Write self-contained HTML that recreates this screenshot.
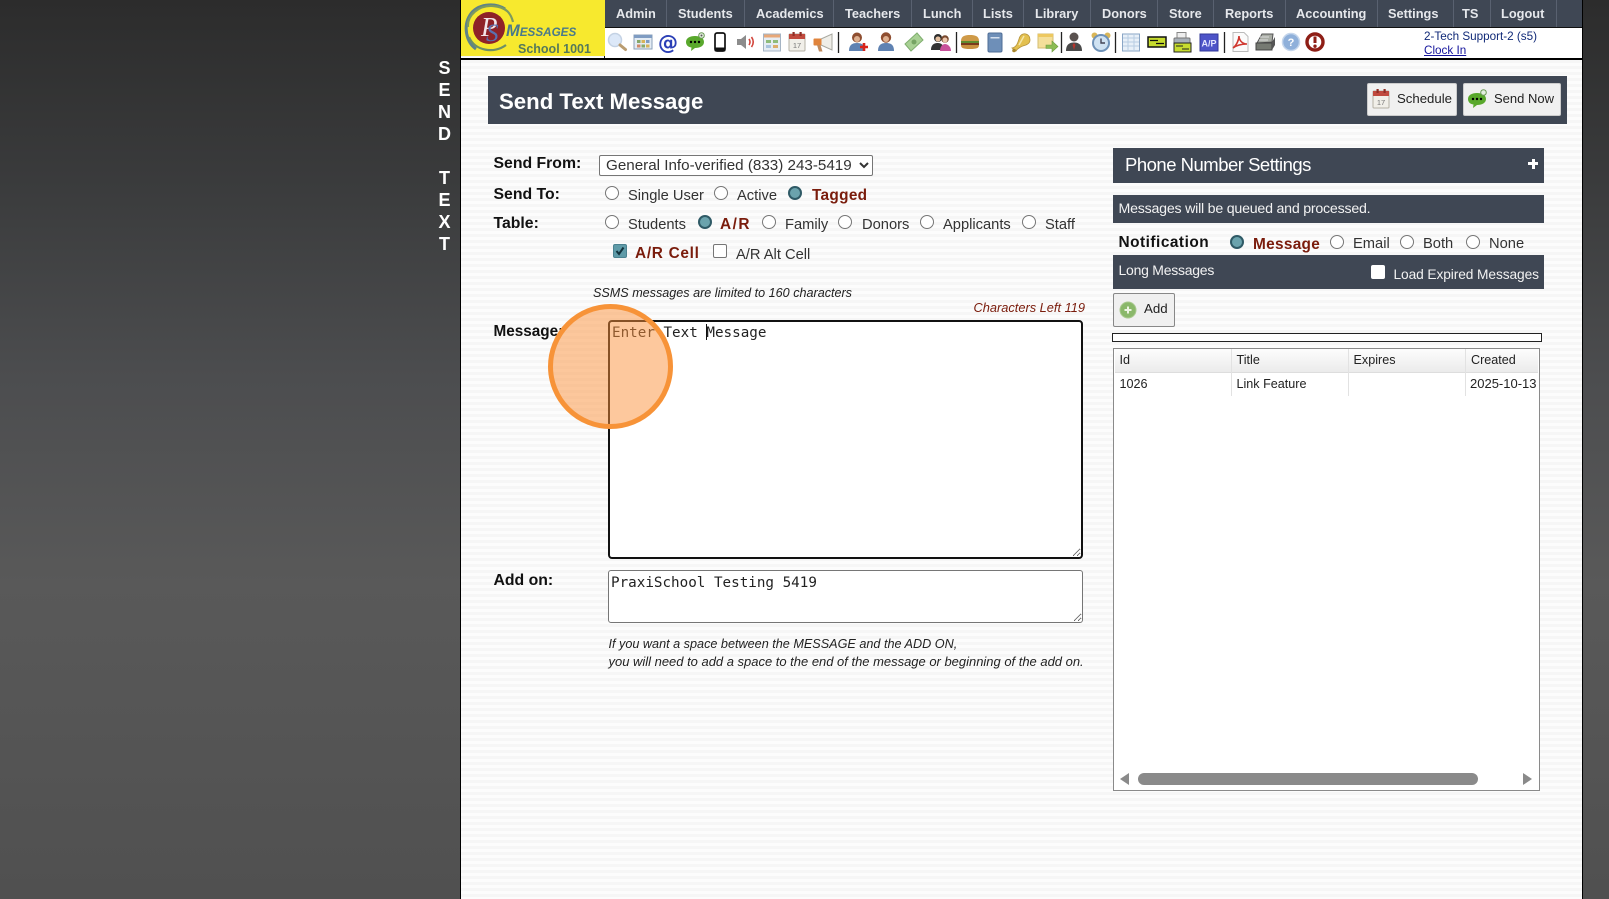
<!DOCTYPE html>
<html lang="en">
<head>
<meta charset="utf-8">
<title>Send Text Message</title>
<style>
html,body{margin:0;padding:0;width:1609px;height:899px;overflow:hidden;font-family:"Liberation Sans",sans-serif;background:#555}
.side{position:absolute;top:0;height:899px;background:linear-gradient(#2c2c2c 0,#3a3b3c 20%,#4c4d4f 42%,#595959 65%,#505050 100%)}
#page{position:absolute;left:460px;top:0;width:1123px;height:899px;box-sizing:border-box;border-left:1px solid #000;border-right:1px solid #000;background:repeating-linear-gradient(#f6f6f6 0,#f6f6f6 3px,#fcfcfc 3px,#fcfcfc 6px)}
.abs,.t{position:absolute}
.t{white-space:nowrap;line-height:20px;height:20px;color:#222}
.l{font-size:14.7px;color:#333}
.b{font-size:15.8px;font-weight:bold;color:#111}
.r{font-size:15.4px;font-weight:bold;color:#7a1c0c;letter-spacing:.3px}
.nav{font-size:12.8px;font-weight:bold;color:#e6e8ec}
.sep{position:absolute;top:0;width:1px;height:27px;background:#596170}
.bar{position:absolute;background:#3f4754}
.ro{position:absolute;width:14px;height:14px;box-sizing:border-box;border:1px solid #767676;border-radius:50%;background:#fff}
.rc{position:absolute;width:14px;height:14px;box-sizing:border-box;border:2px solid #2f5a66;border-radius:50%;background:#6ba3ad}
.cb{position:absolute;width:14px;height:14px;box-sizing:border-box;border:1px solid #767676;border-radius:2px;background:#fff}
.btn{position:absolute;box-sizing:border-box;background:#f0f0f0;border:1px solid #ccc;border-radius:2px}
.let{position:absolute;left:434px;width:21px;text-align:center;font-size:18px;font-weight:bold;color:#fff;line-height:20px}
textarea{position:absolute;box-sizing:border-box;margin:0;background:#fff;font-family:"DejaVu Sans Mono","Liberation Mono",monospace;font-size:14.25px;line-height:17px;padding:2px;color:#222;outline:none}
select{position:absolute;box-sizing:border-box;margin:0;background:#fff;border:1px solid #767676;border-radius:2px;font-family:"Liberation Sans",sans-serif;font-size:15.2px;color:#333;padding:0 0 0 2px}
.i{font-size:12.6px;font-style:italic;color:#222}
.c{font-size:12.6px;color:#222}
</style>
</head>
<body>
<div class="side" style="left:0;width:460px"></div>
<div class="side" style="left:1583px;width:26px"></div>

<div class="let" style="top:58px">S</div>
<div class="let" style="top:80px">E</div>
<div class="let" style="top:102px">N</div>
<div class="let" style="top:124px">D</div>
<div class="let" style="top:168px">T</div>
<div class="let" style="top:190px">E</div>
<div class="let" style="top:212px">X</div>
<div class="let" style="top:234px">T</div>

<div id="page"></div>

<!-- top nav -->
<div class="bar" style="left:605px;top:0;width:977px;height:27px;border-bottom:1px solid #111"></div>
<div class="abs" style="left:604px;top:28px;width:978px;height:30px;background:#fff"></div>
<div class="abs" style="left:461px;top:58px;width:1121px;height:1.5px;background:#000"></div>
<div class="abs" style="left:604px;top:0;width:1px;height:58px;background:#111"></div>

<div class="sep" style="left:666px"></div><div class="sep" style="left:744px"></div><div class="sep" style="left:833px"></div><div class="sep" style="left:911px"></div><div class="sep" style="left:972px"></div><div class="sep" style="left:1023px"></div><div class="sep" style="left:1090px"></div><div class="sep" style="left:1157px"></div><div class="sep" style="left:1213px"></div><div class="sep" style="left:1285px"></div><div class="sep" style="left:1377px"></div><div class="sep" style="left:1453px"></div><div class="sep" style="left:1490px"></div><div class="sep" style="left:1556px"></div>

<span class="t nav" style="left:616px;top:4px">Admin</span>
<span class="t nav" style="left:678px;top:4px">Students</span>
<span class="t nav" style="left:756px;top:4px">Academics</span>
<span class="t nav" style="left:845px;top:4px">Teachers</span>
<span class="t nav" style="left:923px;top:4px">Lunch</span>
<span class="t nav" style="left:983px;top:4px">Lists</span>
<span class="t nav" style="left:1035px;top:4px">Library</span>
<span class="t nav" style="left:1102px;top:4px">Donors</span>
<span class="t nav" style="left:1169px;top:4px">Store</span>
<span class="t nav" style="left:1225px;top:4px">Reports</span>
<span class="t nav" style="left:1296px;top:4px">Accounting</span>
<span class="t nav" style="left:1388px;top:4px">Settings</span>
<span class="t nav" style="left:1462px;top:4px">TS</span>
<span class="t nav" style="left:1501px;top:4px">Logout</span>

<!-- logo -->
<svg class="abs" style="left:461px;top:0" width="144" height="58" viewBox="0 0 144 58">
<rect width="144" height="56" fill="#f7e92e"/>
<path d="M15 49C5 42 2 26 9 15S33 2 44 9" fill="none" stroke="#5f8388" stroke-width="3"/>
<path d="M7 27C6 15 18 5 32 6S50 14 52 22" fill="none" stroke="#7d9a5e" stroke-width="2.2"/>
<path d="M8 37C14 51 33 54 45 45" fill="none" stroke="#6d8f66" stroke-width="2.2"/>
<circle cx="28" cy="28" r="16" fill="#8e2228"/>
<text x="20" y="36" font-family="Liberation Serif,serif" font-size="27" font-style="italic" fill="#f2e6ea">P</text>
<text x="25" y="41" font-family="Liberation Serif,serif" font-size="25" font-style="italic" fill="#5a70b0">S</text>
<text x="45" y="36" font-family="Liberation Sans,sans-serif" font-weight="bold" font-style="italic" fill="#49798a"><tspan font-size="16.5">M</tspan><tspan font-size="11.7">ESSAGES</tspan></text>
<text x="57" y="53" font-family="Liberation Sans,sans-serif" font-weight="bold" font-size="12.5" fill="#55795a">School 1001</text>
</svg>

<!-- toolbar icons -->
<svg class="abs" style="left:0;top:0;pointer-events:none" width="1609" height="70">
<g stroke="#222" stroke-width="1.3"><path d="M838.500 32V53M956.500 32V53M1061.500 32V53M1115.500 32V53M1224.500 32V53"/></g>
<g transform="translate(606,31)"><circle cx="9" cy="9" r="6.500" fill="#dce8f8" stroke="#c4d2e4" stroke-width="1.500"/><path d="M14 14L19.500 18.500" stroke="#b99c70" stroke-width="3" stroke-linecap="round"/></g>
<g transform="translate(632,31)"><rect x="2" y="4" width="18" height="14" fill="#e4ecf4" stroke="#8ba0ba"/><rect x="2" y="4" width="18" height="3" fill="#7f9cc2"/><rect x="5" y="9" width="3.500" height="3" fill="#86a86a"/><rect x="9.500" y="9" width="3.500" height="3" fill="#d8b35a"/><rect x="14" y="9" width="3.500" height="3" fill="#7f9cc2"/><rect x="5" y="13.500" width="3.500" height="3" fill="#d08a6a"/><rect x="9.500" y="13.500" width="3.500" height="3" fill="#86a86a"/><rect x="14" y="13.500" width="3.500" height="3" fill="#d8b35a"/></g>
<text x="668" y="49.500" text-anchor="middle" font-family="DejaVu Sans,sans-serif" font-weight="bold" font-size="20" fill="#2b3fb6">@</text>
<g transform="translate(684,31)"><path d="M2 11C2 7 6 5 11 5S20 7 20 11 16 17 11 17L7 20 7.500 16.500C4 16 2 14 2 11Z" fill="#59a82c"/><circle cx="7" cy="11" r="1.200"/><circle cx="11" cy="11" r="1.200"/><circle cx="15" cy="11" r="1.200"/><circle cx="17.500" cy="4.500" r="2.800" fill="#e4efe0" stroke="#6b9a55"/><circle cx="17.500" cy="4.500" r="1" fill="#555"/></g>
<g transform="translate(709,31)"><rect x="6" y="2" width="10" height="18" rx="2" fill="#fff" stroke="#111" stroke-width="1.700"/><rect x="5.500" y="16.500" width="11" height="4" rx="1" fill="#111"/></g>
<g transform="translate(735,31)"><path d="M2 8H6L11 4V18L6 14H2Z" fill="#8c8c8c"/><path d="M14 8Q16 11 14 14M16.500 6Q20 11 16.500 16" fill="none" stroke="#d2453c" stroke-width="1.600"/></g>
<g transform="translate(761,31)"><rect x="2.500" y="3" width="17" height="17" fill="#e6edf3" stroke="#a5b4c4"/><rect x="3" y="3.500" width="16" height="3" fill="#e8a878"/><path d="M5 9H10V12H5ZM12 9H17V12H12Z" fill="#8fbc7a"/><path d="M5 14H10V17H5Z" fill="#a9c4de"/><path d="M12 14H17V17H12Z" fill="#dcae6a"/></g>
<g transform="translate(786,31)"><rect x="3" y="3" width="16" height="17" rx="1" fill="#f1efe9" stroke="#b5b0a5"/><rect x="3" y="3" width="16" height="5" fill="#c04a3e"/><rect x="6.500" y="1" width="2.200" height="4" fill="#8f2e25"/><rect x="13.500" y="1" width="2.200" height="4" fill="#8f2e25"/><text x="11" y="17" text-anchor="middle" font-size="7.500" font-family="Liberation Sans,sans-serif" fill="#777">17</text></g>
<g transform="translate(812,31)"><path d="M9 8L20 3V19L9 14Z" fill="#efeee8" stroke="#a8a8a0"/><rect x="1.500" y="7.500" width="8" height="7" rx="1" fill="#e0843c"/><path d="M5 14L7 20.500H10.500L8.500 14Z" fill="#c08a5c"/></g>
<g transform="translate(847,31)"><circle cx="10" cy="6.500" r="5" fill="#8f4e30"/><circle cx="10" cy="8" r="3" fill="#deb090"/><path d="M2 20C2 14 5 12 10 12S18 14 18 20Z" fill="#5f82b2"/><path d="M13 16H21M17 12V20" stroke="#d8241c" stroke-width="2.600"/></g>
<g transform="translate(875,31)"><circle cx="11" cy="6.500" r="5.200" fill="#8f4e30"/><circle cx="11" cy="8" r="3" fill="#deb090"/><path d="M3 20C3 14 6 12 11 12S19 14 19 20Z" fill="#5f82b2"/></g>
<g transform="translate(902,31)"><path d="M3 13L15 2 21 9 9 20Z" fill="#a8d094" stroke="#7fae6e"/><circle cx="12" cy="11" r="2.500" fill="#76a464"/></g>
<g transform="translate(930,31)"><circle cx="8" cy="7" r="4" fill="#2d2d2d"/><circle cx="8" cy="8" r="2.600" fill="#e4c0a0"/><path d="M1 19C1 13 5 12 8 12S14 14 14 19Z" fill="#333"/><circle cx="15" cy="8" r="3.800" fill="#7a4a2f"/><circle cx="15" cy="9" r="2.500" fill="#ecc6ac"/><path d="M10 20C10 15 13 13 15 13S21 15 21 20Z" fill="#c8509a"/></g>
<g transform="translate(959,31)"><path d="M2 10C2 5 6 4 11 4S20 5 20 10Z" fill="#cf9a48"/><rect x="2" y="10" width="18" height="2" fill="#5f8c30"/><rect x="2" y="12" width="18" height="2" fill="#7a3a1e"/><path d="M2 14H20C20 17 18 18 11 18S2 17 2 14Z" fill="#c89040"/></g>
<g transform="translate(984,31)"><rect x="4" y="2" width="14" height="19" rx="1.500" fill="#6e8fb8" stroke="#4f6e96"/><rect x="6.500" y="6" width="9" height="1.500" fill="#d5e0ee"/></g>
<g transform="translate(1010,31)"><path d="M2 17C7 16 8 11 9 8 10 4 13 2 16 3S20 6 20 9 18 13 16 14C12 15 8 17 6 20Z" fill="#e3c04f" stroke="#b4923a" stroke-width=".8"/><path d="M14 5L9 14" stroke="#f4e6aa" stroke-width="1.500"/><circle cx="4" cy="19.500" r="1.800" fill="#a8862e"/></g>
<g transform="translate(1036,31)"><rect x="2" y="3" width="15" height="14" fill="#f4df9a" stroke="#d4bd70"/><rect x="2" y="3" width="15" height="3" fill="#edc860"/><path d="M10 14H16V10L22 15.500 16 21V17.500H10Z" fill="#8cbc54" stroke="#6d9a3e" stroke-width=".6"/></g>
<g transform="translate(1063,31)"><circle cx="11" cy="6" r="4.500" fill="#5a5250"/><path d="M3 20C3 13 7 11.500 11 11.500S19 13 19 20Z" fill="#4a4a4a"/><path d="M11 12L9.500 14 11 19 12.500 14Z" fill="#b8342c"/></g>
<g transform="translate(1090,31)"><circle cx="4.500" cy="4.500" r="3" fill="#d9b658"/><circle cx="17.500" cy="4.500" r="3" fill="#d9b658"/><circle cx="11" cy="12" r="8" fill="#cfe2f2" stroke="#6f92b8" stroke-width="2"/><path d="M11 7.500V12H15" fill="none" stroke="#445" stroke-width="1.400"/></g>
<g transform="translate(1120,31)"><rect x="2.500" y="3" width="17" height="17" fill="#e8f0f8" stroke="#8aa6c6"/><path d="M3 7H19M3 11H19M3 15H19M8 3V20M14 3V20" stroke="#b8cde2"/></g>
<g transform="translate(1146,31)"><rect x="2" y="6" width="18" height="10" fill="#c7dc2e" stroke="#111" stroke-width="1.500"/><path d="M4 9.500H12M10 12.500H18" stroke="#111" stroke-width="1.300"/></g>
<g transform="translate(1171,31)"><rect x="6" y="1.500" width="9" height="6" fill="#eee" stroke="#888"/><rect x="3" y="7" width="16" height="6" rx="1" fill="#a8b0b8" stroke="#777"/><rect x="3" y="12" width="17" height="9" fill="#c7dc2e" stroke="#222"/><path d="M5 15H12M11 18H18" stroke="#222"/></g>
<g transform="translate(1198,31)"><rect x="2" y="3" width="18" height="17" fill="#4d54c8" stroke="#33399a"/><text x="11" y="15.500" text-anchor="middle" font-size="9" font-weight="bold" font-family="Liberation Sans,sans-serif" fill="#e4e6ff">A/P</text></g>
<g transform="translate(1229,31)"><path d="M4 1.500H15L19 5.500V20.500H4Z" fill="#fbfbfb" stroke="#bbb"/><path d="M4 17C8 14 10 8 10 5 10 9 13 13 18 13 13 13 8 14 4 17Z" fill="none" stroke="#d03830" stroke-width="1.600"/></g>
<g transform="translate(1254,31)"><path d="M3 12L8 3H19L18 11Z" fill="#a8aca4" stroke="#555"/><path d="M2 12H18V19H2Z" fill="#767a72" stroke="#444"/><path d="M18 11L21 6V14L18 19Z" fill="#555"/><path d="M6 6H15M5 9H14" stroke="#ddd"/></g>
<g transform="translate(1280,31)"><circle cx="11" cy="11" r="8.500" fill="#8fb0da" stroke="#c5d6ec" stroke-width="1.500"/><text x="11" y="15" text-anchor="middle" font-size="11" font-weight="bold" font-family="Liberation Sans,sans-serif" fill="#fff">?</text></g>
<g transform="translate(1304,31)"><circle cx="11" cy="11" r="8" fill="#fff" stroke="#8e1e16" stroke-width="3.400"/><path d="M11 5.500V12" stroke="#8e1e16" stroke-width="3"/><circle cx="11" cy="15.200" r="1.700" fill="#8e1e16"/></g>
</svg>

<span class="t" style="left:1424px;top:27px;font-size:11.700px;color:#112a78">2-Tech Support-2 (s5)</span>
<a class="t" style="left:1424px;top:41px;font-size:11.700px;color:#14149c;text-decoration:underline">Clock In</a>

<!-- title bar -->
<div class="bar" style="left:488px;top:76px;width:1079px;height:48px"></div>
<span class="t" style="left:499px;top:92px;font-size:22.200px;font-weight:bold;color:#fff">Send Text Message</span>
<div class="btn" style="left:1367px;top:83px;width:90px;height:33px"></div>
<div class="btn" style="left:1463px;top:83px;width:98px;height:33px"></div>
<svg class="abs" style="left:1370px;top:88px" width="22" height="22"><rect x="3" y="3" width="16" height="17" rx="1" fill="#f1efe9" stroke="#b5b0a5"/><rect x="3" y="3" width="16" height="5" fill="#c04a3e"/><rect x="6.500" y="1" width="2.200" height="4" fill="#8f2e25"/><rect x="13.500" y="1" width="2.200" height="4" fill="#8f2e25"/><text x="11" y="17" text-anchor="middle" font-size="7.500" font-family="Liberation Sans,sans-serif" fill="#777">17</text></svg>
<span class="t" style="left:1397px;top:89px;font-size:13.200px;color:#222">Schedule</span>
<svg class="abs" style="left:1466px;top:88px" width="22" height="22"><path d="M2 11C2 7 6 5 11 5S20 7 20 11 16 17 11 17L7 20 7.500 16.500C4 16 2 14 2 11Z" fill="#59a82c"/><circle cx="7" cy="11" r="1.200"/><circle cx="11" cy="11" r="1.200"/><circle cx="15" cy="11" r="1.200"/><circle cx="17.500" cy="4.500" r="2.800" fill="#e4efe0" stroke="#6b9a55"/></svg>
<span class="t" style="left:1494px;top:89px;font-size:13px;color:#222">Send Now</span>

<!-- left form -->
<span class="t b" style="left:493.500px;top:154px">Send From:</span>
<select style="left:599px;top:155px;width:274px;height:21px"><option>General Info-verified (833) 243-5419</option></select>

<span class="t b" style="left:493.500px;top:185px">Send To:</span>
<span class="ro" style="left:605px;top:186px"></span><span class="t l" style="left:628px;top:186px">Single User</span>
<span class="ro" style="left:714px;top:186px"></span><span class="t l" style="left:737px;top:186px">Active</span>
<span class="rc" style="left:788px;top:186px"></span><span class="t r" style="left:812px;top:186px">Tagged</span>

<span class="t b" style="left:493.500px;top:214px">Table:</span>
<span class="ro" style="left:605px;top:215px"></span><span class="t l" style="left:628px;top:215px">Students</span>
<span class="rc" style="left:698px;top:215px"></span><span class="t r" style="left:720px;top:215px;letter-spacing:1.500px">A/R</span>
<span class="ro" style="left:762px;top:215px"></span><span class="t l" style="left:785px;top:215px">Family</span>
<span class="ro" style="left:838px;top:215px"></span><span class="t l" style="left:862px;top:215px">Donors</span>
<span class="ro" style="left:920px;top:215px"></span><span class="t l" style="left:943px;top:215px">Applicants</span>
<span class="ro" style="left:1022px;top:215px"></span><span class="t l" style="left:1045px;top:215px">Staff</span>

<span class="abs" style="left:613px;top:244px;width:14px;height:14px;border-radius:2px;background:#5f9ba8;border:1px solid #4b8290;box-sizing:border-box"></span>
<svg class="abs" style="left:613px;top:244px" width="14" height="14"><path d="M3.500 7L6 10 10.500 3.500" fill="none" stroke="#12333d" stroke-width="2"/></svg>
<span class="t r" style="left:635px;top:244px;letter-spacing:.7px">A/R Cell</span>
<span class="cb" style="left:713px;top:244px"></span>
<span class="t l" style="left:736px;top:245px">A/R Alt Cell</span>

<span class="t i" style="left:593px;top:283px">SSMS messages are limited to 160 characters</span>
<span class="t i" style="right:524px;top:298px;color:#7a1c0c;font-size:12.800px">Characters Left 119</span>

<span class="t b" style="left:493.500px;top:322px;font-size:15.300px">Message:</span>
<textarea style="left:608px;top:320px;width:475px;height:239px;border:2px solid #111;border-radius:4px;padding:3px 2px">Enter Text Message</textarea>
<div class="abs" style="left:706px;top:324px;width:1px;height:16px;background:#111"></div>

<span class="t b" style="left:493.500px;top:571px">Add on:</span>
<textarea style="left:608px;top:570px;width:475px;height:53px;border:1px solid #767676;border-radius:3px;padding:4px 2px">PraxiSchool Testing 5419</textarea>

<span class="t i" style="left:608.500px;top:634px;font-size:12.650px">If you want a space between the MESSAGE and the ADD ON,</span>
<span class="t i" style="left:608.500px;top:652px;font-size:12.970px">you will need to add a space to the end of the message or beginning of the add on.</span>

<!-- right panel -->
<div class="bar" style="left:1113px;top:148px;width:431px;height:35px"></div>
<span class="t" style="left:1125px;top:155px;font-size:18.500px;letter-spacing:-.5px;color:#fff">Phone Number Settings</span>
<span class="abs" style="left:1528px;top:162px;width:10px;height:3px;background:#fff"></span>
<span class="abs" style="left:1531.500px;top:158.500px;width:3px;height:10px;background:#fff"></span>

<div class="bar" style="left:1113px;top:195px;width:431px;height:28px"></div>
<span class="t" style="left:1118.500px;top:199px;font-size:14.200px;letter-spacing:-.22px;color:#f2f2f2">Messages will be queued and processed.</span>

<span class="t" style="left:1118.500px;top:233px;font-size:15.400px;font-weight:bold;letter-spacing:.5px;color:#111">Notification</span>
<span class="rc" style="left:1230px;top:235px"></span><span class="t r" style="left:1253px;top:235px">Message</span>
<span class="ro" style="left:1330px;top:235px"></span><span class="t l" style="left:1353px;top:234px">Email</span>
<span class="ro" style="left:1400px;top:235px"></span><span class="t l" style="left:1423px;top:234px">Both</span>
<span class="ro" style="left:1466px;top:235px"></span><span class="t l" style="left:1489px;top:234px">None</span>

<div class="bar" style="left:1113px;top:255px;width:431px;height:34px"></div>
<span class="t" style="left:1118.500px;top:260px;font-size:14px;letter-spacing:-.25px;color:#f2f2f2">Long Messages</span>
<span class="abs" style="left:1371px;top:265px;width:14px;height:14px;background:#fff;border-radius:2px"></span>
<span class="t" style="left:1393.500px;top:265px;font-size:13.750px;letter-spacing:-.1px;color:#f2f2f2">Load Expired Messages</span>

<div class="btn" style="left:1113px;top:293px;width:62px;height:34px;background:#f0f0f0;border:1px solid #888"></div>
<svg class="abs" style="left:1118px;top:300px" width="20" height="20"><circle cx="10" cy="10" r="8" fill="#8ab86a" stroke="#a9c98e"/><path d="M10 6.500V13.500M6.500 10H13.500" stroke="#eef5e4" stroke-width="2"/></svg>
<span class="t" style="left:1144px;top:299px;font-size:13.300px;color:#222">Add</span>

<div class="abs" style="left:1112px;top:333px;width:430px;height:9px;box-sizing:border-box;background:#fff;border:1px solid #222"></div>

<div class="abs" style="left:1113px;top:348px;width:427px;height:443px;box-sizing:border-box;background:#fff;border:1px solid #8a8a8a"></div>
<div class="abs" style="left:1115px;top:349px;width:423px;height:23px;background:linear-gradient(#fdfdfd,#ebebeb);border-bottom:1px solid #ddd"></div>
<div class="abs" style="left:1231px;top:349px;width:1px;height:47px;background:#e2e2e2"></div>
<div class="abs" style="left:1348px;top:349px;width:1px;height:47px;background:#e2e2e2"></div>
<div class="abs" style="left:1465px;top:349px;width:1px;height:47px;background:#e2e2e2"></div>
<span class="t c" style="left:1119.500px;top:350px">Id</span>
<span class="t c" style="left:1236.500px;top:350px">Title</span>
<span class="t c" style="left:1353.500px;top:350px">Expires</span>
<span class="t c" style="left:1471px;top:350px">Created</span>
<span class="t c" style="left:1119.500px;top:374px">1026</span>
<span class="t c" style="left:1236.500px;top:374px">Link Feature</span>
<span class="t c" style="left:1470px;top:374px;font-size:13px">2025-10-13</span>
<div class="abs" style="left:1138px;top:773px;width:340px;height:12px;border-radius:6px;background:#8a8a8a"></div>
<svg class="abs" style="left:1118px;top:772px" width="415" height="14"><path d="M2 7L11 1V13Z" fill="#8a8a8a"/><path d="M405 1L414 7 405 13Z" fill="#8a8a8a"/></svg>

<!-- highlight circle -->
<div class="abs" style="left:548px;top:303.500px;width:125px;height:125px;box-sizing:border-box;border-radius:50%;background:rgba(251,146,60,.5);border:5px solid #f79338"></div>
</body>
</html>
